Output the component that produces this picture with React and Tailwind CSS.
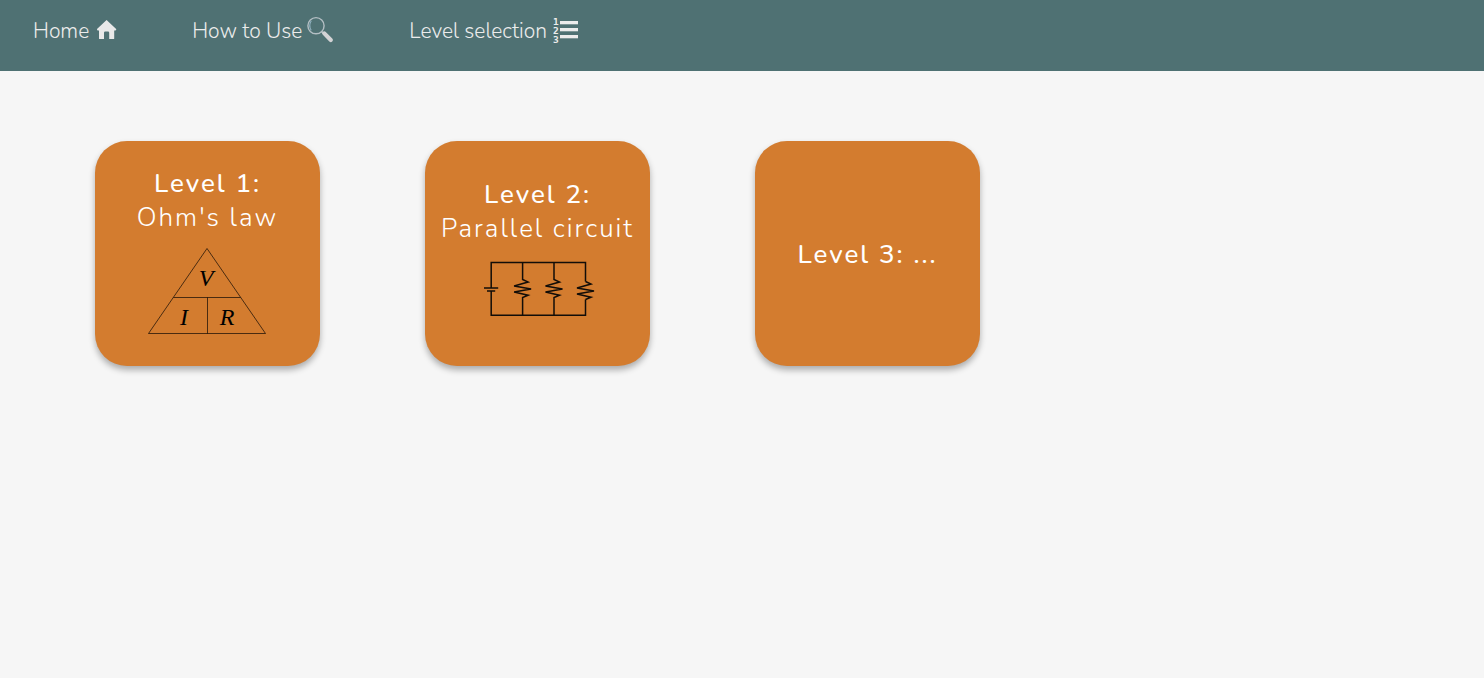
function HomeIcon() {
  return (
    <svg className="-mt-1" width="20" height="20" viewBox="0 0 20 20" fill="#e9e9e9" aria-hidden="true">
      <path d="M9.6 0 L19.4 9.3 L18.6 10.5 H17.2 V18.4 Q17.2 19 16.6 19 H12.2 V12.8 Q12.2 11.6 11 11.6 H8.2 Q7 11.6 7 12.8 V19 H2.6 Q2 19 2 18.4 V10.5 H0.6 L-0.2 9.3 Z" />
    </svg>
  );
}

function SearchIcon() {
  return (
    <svg className="-mt-1" width="28" height="28" viewBox="0 0 28 28" fill="none" aria-hidden="true">
      <circle cx="10" cy="9.7" r="8.1" stroke="#b4bfc4" strokeWidth="1.4" />
      <path d="M5.3 4.8 Q2.2 9.5 5.2 14.4" stroke="#8fb0be" strokeWidth="1.1" />
      <path d="M15.7 15.6 L18 17.8" stroke="#b4bfc4" strokeWidth="2" />
      <path d="M18.3 17.4 L24.8 24" stroke="#d3d3d5" strokeWidth="4.2" strokeLinecap="round" />
    </svg>
  );
}

function NumberedListIcon() {
  return (
    <svg className="-mt-1" width="26" height="26" viewBox="0 0 26 26" fill="#ececec" aria-hidden="true">
      <g fontFamily="DejaVu Sans Mono, monospace" fontWeight="700" fontSize="9.5">
        <text x="0" y="7.5">1</text>
        <text x="0" y="16.5">2</text>
        <text x="0" y="25.5">3</text>
      </g>
      <rect x="7" y="4" width="18" height="3.3" />
      <rect x="7" y="11" width="18" height="3.3" />
      <rect x="7" y="18" width="18" height="3.3" />
    </svg>
  );
}

function OhmTriangle() {
  return (
    <svg width="119" height="107" viewBox="0 1 119 107" aria-hidden="true">
      <path
        d="M59 14.5 L117.5 99.5 H0.5 Z M25.5 63.5 H92.5 M59.5 63.5 V99.5"
        fill="none"
        stroke="#000"
        strokeOpacity="0.65"
      />
      <g
        fontFamily="Liberation Serif, serif"
        fontStyle="italic"
        fontSize="24"
        textAnchor="middle"
      >
        <text x="59" y="52">V</text>
        <text x="37" y="91">I</text>
        <text x="80" y="91">R</text>
      </g>
    </svg>
  );
}

function ParallelCircuit() {
  const zigzag = "l5.5 2.5 l-14 4 l17 3 l-17 3 l14 3.3 l-5.5 2.2";
  return (
    <svg
      width="119"
      height="85"
      viewBox="0 1 119 85"
      fill="none"
      stroke="#120d08"
      strokeWidth="1.5"
      aria-hidden="true"
    >
      <path d="M13.2 43 V17.4 H107.5 V36.5 M13.2 46 V70.2 H107.5 V54.5" />
      <path d="M6 43 H20.2 M9 46 H17.2" />
      <path d={`M44.6 17.4 V34.5 ${zigzag} V70.2`} />
      <path d={`M76 17.4 V34.5 ${zigzag} V70.2`} />
      <path d={`M107.5 36.5 ${zigzag}`} />
    </svg>
  );
}

const links = [
  { label: "Home", Icon: HomeIcon, gap: "gap-2" },
  { label: "How to Use", Icon: SearchIcon, gap: "gap-1" },
  { label: "Level selection", Icon: NumberedListIcon, gap: "gap-1.5" },
];

const levels = [
  { title: "Level 1:", topic: "Ohm's law", Drawing: OhmTriangle },
  { title: "Level 2:", topic: "Parallel circuit", Drawing: ParallelCircuit },
  { title: "Level 3: ..." },
];

export default function App() {
  return (
    <div className="min-h-screen bg-[#f6f6f6] font-['Nunito','Lato',sans-serif]">
      <header className="bg-[#4f7173] px-[33px] pt-4 pb-6">
        <nav className="flex flex-wrap gap-x-[75px]">
          {links.map(({ label, Icon, gap }) => (
            <a
              key={label}
              href="#"
              className={`flex items-center text-[21px] leading-[31px] font-light text-[#ececec] ${gap}`}
            >
              {label}
              <Icon />
            </a>
          ))}
        </nav>
      </header>
      <main className="flex flex-wrap gap-[105px] px-[95px] py-[70px]">
        {levels.map(({ title, topic, Drawing }) => (
          <button
            key={title}
            type="button"
            className="flex size-[225px] flex-col items-center justify-center rounded-[32px] bg-[#d37c2f] pt-0.5 text-[26px] leading-[34px] tracking-[2px] whitespace-nowrap text-white shadow-[0_4px_6px_rgba(0,0,0,0.3)]"
          >
            <span className="font-medium">{title}</span>
            {topic && <span className="font-light">{topic}</span>}
            {Drawing && <Drawing />}
          </button>
        ))}
      </main>
    </div>
  );
}
